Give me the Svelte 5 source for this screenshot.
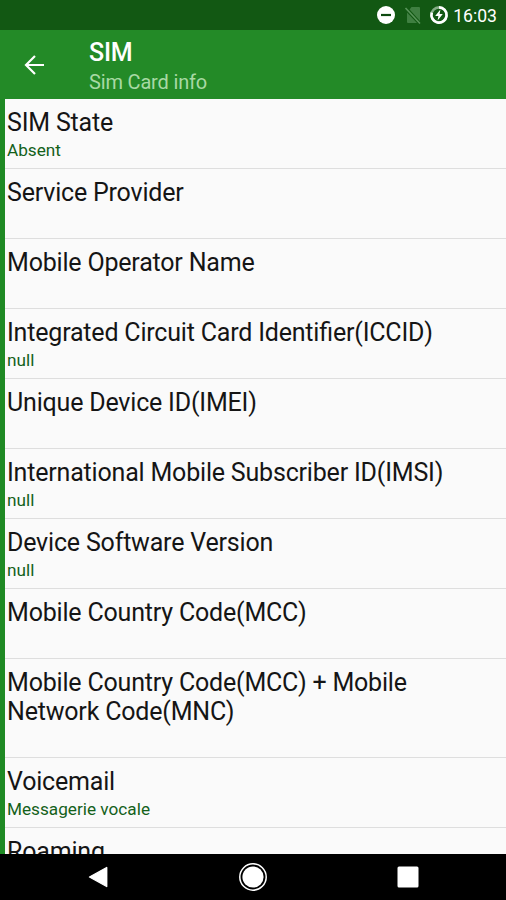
<script lang="ts">
  interface InfoRow {
    title: string;
    value?: string;
  }

  const rows: InfoRow[] = [
    { title: 'SIM State', value: 'Absent' },
    { title: 'Service Provider' },
    { title: 'Mobile Operator Name' },
    { title: 'Integrated Circuit Card Identifier(ICCID)', value: 'null' },
    { title: 'Unique Device ID(IMEI)' },
    { title: 'International Mobile Subscriber ID(IMSI)', value: 'null' },
    { title: 'Device Software Version', value: 'null' },
    { title: 'Mobile Country Code(MCC)' },
    { title: 'Mobile Country Code(MCC) + Mobile Network Code(MNC)' },
    { title: 'Voicemail', value: 'Messagerie vocale' },
    { title: 'Roaming' }
  ];
</script>

<div class="screen">
  <div class="status-bar">
    <svg width="20" height="20" viewBox="0 0 20 20">
      <circle cx="10" cy="10" r="9" fill="#fff" />
      <path d="M5 10h10" stroke="#0d4a10" stroke-width="2.2" />
    </svg>
    <svg class="no-sim" width="18" height="20" viewBox="0 0 18 20">
      <path d="M7.5 2H15a1 1 0 0 1 1 1v13L5.6 4.4z M3 7.5 13 18H4a1 1 0 0 1-1-1z" fill="#3f7f41" />
      <path d="M1.5 3 16 18.5" stroke="#5a945b" stroke-width="1.6" />
    </svg>
    <svg class="battery" width="20" height="20" viewBox="0 0 20 20">
      <circle cx="10" cy="10" r="7.6" fill="none" stroke="#84ad85" stroke-width="2.6" />
      <path d="M10 2.4a7.6 7.6 0 1 1-7.2 5.2" fill="none" stroke="#fff" stroke-width="2.6" />
      <path d="M11.4 4.6 6.2 11h3.2l-.8 4.4L13.8 9h-3.2z" fill="#fff" />
    </svg>
    <span class="clock">16:03</span>
  </div>

  <header class="toolbar">
    <button class="back" aria-label="Back">
      <svg width="22" height="22" viewBox="0 0 22 22">
        <path d="M20 11H2.5M11 2 2 11l9 9" fill="none" stroke="#fff" stroke-width="2.2" />
      </svg>
    </button>
    <div class="heading">
      <h1>SIM</h1>
      <p>Sim Card info</p>
    </div>
  </header>

  <ul class="list">
    {#each rows as row}
      <li class="row">
        <div class="title">{row.title}</div>
        <div class="value">{row.value ?? ''}</div>
      </li>
    {/each}
  </ul>

  <nav class="nav-bar">
    <button aria-label="Back">
      <svg width="30" height="30" viewBox="0 0 30 30">
        <path d="M6.5 15 23.7 5.5v19z" fill="#fff" stroke="#fff" stroke-width="1.4" stroke-linejoin="round" />
      </svg>
    </button>
    <button aria-label="Home">
      <svg width="30" height="30" viewBox="0 0 30 30">
        <circle cx="15" cy="15" r="13.2" fill="none" stroke="#fff" stroke-width="1.5" />
        <circle cx="15" cy="15" r="10.6" fill="#fff" />
      </svg>
    </button>
    <button aria-label="Recent apps">
      <svg width="30" height="30" viewBox="0 0 30 30">
        <rect x="4.5" y="4.5" width="21" height="21" rx="1.5" fill="#fff" />
      </svg>
    </button>
  </nav>
</div>

<style>
  :global(body) {
    margin: 0;
  }

  .screen {
    display: flex;
    flex-direction: column;
    height: 900px;
    overflow: hidden;
    background: #fafafa;
    font-family: Roboto, sans-serif;
  }

  .status-bar {
    display: flex;
    flex: none;
    align-items: center;
    justify-content: flex-end;
    height: 30px;
    padding-right: 9px;
    box-sizing: border-box;
    background: #125813;
    color: #fff;
  }

  .no-sim {
    margin-left: 8px;
  }

  .battery {
    margin-left: 7px;
  }

  .clock {
    margin-left: 4px;
    padding-top: 2px;
    font-size: 17.6px;
    line-height: 22px;
  }

  .toolbar {
    display: flex;
    flex: none;
    align-items: center;
    height: 69px;
    background: #238a27;
    color: #fff;
  }

  button {
    display: flex;
    align-items: center;
    justify-content: center;
    padding: 0;
    border: none;
    background: none;
  }

  .back {
    width: 70px;
    height: 69px;
  }

  .heading {
    padding: 5px 0 0 19px;
  }

  h1 {
    margin: 0;
    font-size: 25px;
    font-weight: 500;
    letter-spacing: -0.2px;
    line-height: 30px;
  }

  p {
    margin: 0;
    color: #a8d9a4;
    font-size: 20px;
    letter-spacing: -0.17px;
    line-height: 29px;
  }

  .list {
    flex: 1;
    min-height: 0;
    margin: 0;
    padding: 0;
    overflow: hidden;
    border-left: 5px solid #1f8a24;
    list-style: none;
  }

  .row {
    padding: 9px 50px 8px 2px;
    border-bottom: 1px solid #dedede;
  }

  .title {
    color: #151515;
    font-size: 25px;
    font-feature-settings: 'liga' 1;
    letter-spacing: -0.19px;
    line-height: 29px;
  }

  .value {
    height: 23px;
    color: #14611a;
    font-size: 17.2px;
    line-height: 26px;
  }

  .nav-bar {
    display: flex;
    flex: none;
    align-items: center;
    justify-content: center;
    gap: 125px;
    height: 46px;
    background: #000;
  }
</style>
